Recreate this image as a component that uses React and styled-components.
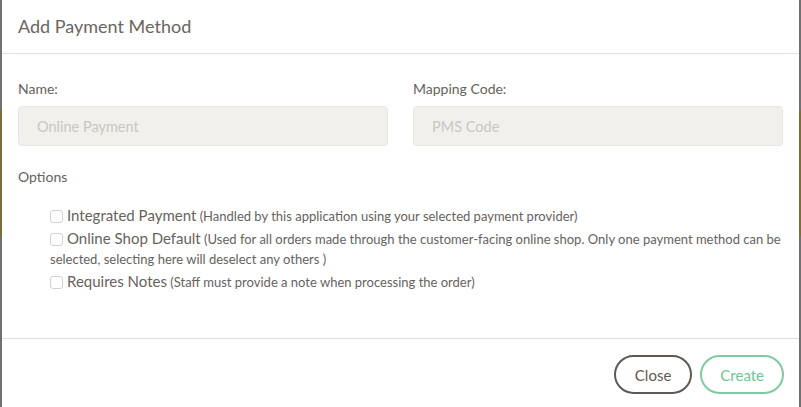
import React from "react";
import styled, { createGlobalStyle } from "styled-components";

const GlobalStyle = createGlobalStyle`
  html, body {
    margin: 0;
    height: 100%;
  }
  body {
    font-family: Lato, "Open Sans", sans-serif;
    background: linear-gradient(
      to bottom,
      #717171 0,
      #717171 110px,
      #7d6d3c 110px,
      #7d6d3c 236px,
      #717171 236px
    );
  }
`;

const options = [
  {
    id: "integrated",
    title: "Integrated Payment",
    note: "(Handled by this application using your selected payment provider)",
  },
  {
    id: "default",
    title: "Online Shop Default",
    note:
      "(Used for all orders made through the customer-facing online shop. Only one payment method can be selected, selecting here will deselect any others )",
  },
  {
    id: "notes",
    title: "Requires Notes",
    note: "(Staff must provide a note when processing the order)",
  },
];

function App() {
  return (
    <>
      <GlobalStyle />
      <Modal>
        <Header>
          <Title>Add Payment Method</Title>
        </Header>

        <Body>
          <FieldRow>
            <Field>
              <Label>Name:</Label>
              <Input placeholder="Online Payment" />
            </Field>
            <Field>
              <Label>Mapping Code:</Label>
              <Input placeholder="PMS Code" />
            </Field>
          </FieldRow>

          <Label>Options</Label>
          <OptionList>
            {options.map((opt) => (
              <Option key={opt.id}>
                <Check type="checkbox" />
                <OptionTitle>{opt.title}</OptionTitle> <Note>{opt.note}</Note>
              </Option>
            ))}
          </OptionList>
        </Body>

        <Footer>
          <PillButton>Close</PillButton>
          <PillButton $primary>Create</PillButton>
        </Footer>
      </Modal>
    </>
  );
}

export default App;

const Modal = styled.div`
  margin-left: 2px;
  width: 797px;
  height: 100vh;
  background: #fff;
  display: flex;
  flex-direction: column;
  color: #666260;
`;

const Header = styled.div`
  height: 53px;
  display: flex;
  align-items: center;
  padding: 0 16px;
  border-bottom: 1px solid #e0e0e6;
  box-sizing: content-box;
`;

const Title = styled.h4`
  margin: 0 0 2px;
  font-size: 18px;
  font-weight: 400;
  color: #6a6562;
`;

const Body = styled.div`
  flex: 1;
  padding: 25px 16px 0;
`;

const FieldRow = styled.div`
  display: grid;
  grid-template-columns: 1fr 1fr;
  column-gap: 25px;
  margin-bottom: 21px;
`;

const Field = styled.div`
  display: flex;
  flex-direction: column;
`;

const Label = styled.div`
  font-size: 14px;
  line-height: 20px;
  color: #666260;
  margin-bottom: 7px;
`;

const Input = styled.input`
  height: 40px;
  box-sizing: border-box;
  border: 1px solid #e8e6e2;
  border-radius: 4px;
  background: #f1f0ed;
  padding: 0 18px;
  font-family: inherit;
  font-size: 14.5px;
  color: #555;
  outline: none;
  &::placeholder {
    color: #c9c7c3;
  }
`;

const OptionList = styled.div`
  padding: 12px 0 0 32px;
  width: 735px;
`;

const Option = styled.label`
  display: block;
  font-size: 13px;
  line-height: 20px;
  margin-bottom: 3px;
  color: #666260;
`;

const Check = styled.input`
  appearance: none;
  width: 13px;
  height: 13px;
  margin: 0 4px 0 0;
  border: 1px solid #d4d2d0;
  border-radius: 3px;
  background: #fff;
  vertical-align: -2px;
`;

const OptionTitle = styled.span`
  font-size: 15px;
  line-height: 1;
`;

const Note = styled.span`
  font-size: 13px;
  line-height: 1;
`;

const Footer = styled.div`
  border-top: 1px solid #dedede;
  padding: 16px 15px 13px;
  display: flex;
  justify-content: flex-end;
  gap: 8px;
`;

const PillButton = styled.button`
  height: 39px;
  padding: 0 ${(p) => (p.$primary ? "18px" : "19px")};
  border-radius: 20px;
  background: #fff;
  border: 2px solid ${(p) => (p.$primary ? "#7ecba1" : "#5f5955")};
  color: ${(p) => (p.$primary ? "#6fc597" : "#5f5955")};
  font-family: inherit;
  font-size: 15px;
  cursor: pointer;
`;
